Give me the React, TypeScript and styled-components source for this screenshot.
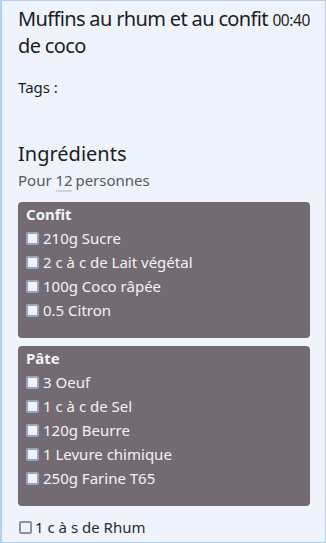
import styled, { createGlobalStyle } from "styled-components";

const GlobalStyle = createGlobalStyle`
  html, body {
    margin: 0;
    padding: 0;
  }
  body {
    font-family: "Noto Sans", "Open Sans", sans-serif;
    color: #1c1c1f;
  }
`;

const Page = styled.main`
  box-sizing: border-box;
  height: 543px;
  background: #eff4fc;
  border: 1px solid #b4cfec;
  border-left-width: 2px;
  padding: 4px 15px 0 16px;
  overflow: hidden;
`;

const TitleRow = styled.header`
  display: flex;
  justify-content: space-between;
  align-items: baseline;
`;

const Title = styled.h1`
  flex: 1;
  margin: 0;
  font-size: 20px;
  line-height: 27px;
  letter-spacing: -0.65px;
  font-weight: 400;
`;

const Time = styled.span`
  flex: none;
  font-size: 15.5px;
  letter-spacing: -0.4px;
  white-space: nowrap;
`;

const Tags = styled.p`
  margin: 18px 0 0;
  font-size: 15px;
  line-height: 20px;
`;

const Heading = styled.h2`
  margin: 44px 0 0;
  font-size: 20px;
  line-height: 26px;
  font-weight: 400;
`;

const Servings = styled.p`
  margin: 3px 0 0;
  font-size: 15px;
  line-height: 20px;
  color: #555a62;
`;

const ServingsInput = styled.span`
  display: inline-block;
  width: 16px;
  line-height: 20px;
  border-bottom: 2px solid #cfd3dc;
  margin-bottom: -2px;
  text-align: center;
`;

const List = styled.div`
  margin-top: 12px;
  display: flex;
  flex-direction: column;
  gap: 8px;
`;

const Group = styled.section`
  background: #736b71;
  border-radius: 4px;
  padding: 0 8px 16px;
  color: #f3f3f5;
`;

const GroupTitle = styled.div`
  font-size: 15px;
  line-height: 24px;
  font-weight: 700;
`;

const Item = styled.label<{ $light?: boolean }>`
  display: flex;
  align-items: center;
  gap: ${({ $light }) => ($light ? "3px" : "4px")};
  margin-top: ${({ $light }) => ($light ? "1px" : "0")};
  font-size: 15px;
  line-height: 24px;
  color: ${({ $light }) => ($light ? "#2b2b30" : "inherit")};
`;

const Box = styled.span<{ $light?: boolean }>`
  box-sizing: border-box;
  width: 13px;
  height: 13px;
  flex: none;
  border-radius: 2px;
  background: ${({ $light }) => ($light ? "transparent" : "#eef2fb")};
  border: 2px solid ${({ $light }) => ($light ? "#8c8f9c" : "#9ea2bc")};
  margin-left: ${({ $light }) => ($light ? "1px" : "0")};
`;

const groups = [
  {
    name: "Confit",
    items: ["210g Sucre", "2 c à c de Lait végétal", "100g Coco râpée", "0.5 Citron"],
  },
  {
    name: "Pâte",
    items: ["3 Oeuf", "1 c à c de Sel", "120g Beurre", "1 Levure chimique", "250g Farine T65"],
  },
];

export default function App() {
  return (
    <>
      <GlobalStyle />
      <Page>
        <TitleRow>
          <Title>Muffins au rhum et au confit de coco</Title>
          <Time>00:40</Time>
        </TitleRow>
        <Tags>Tags :</Tags>
        <Heading>Ingrédients</Heading>
        <Servings>
          Pour <ServingsInput>12</ServingsInput> personnes
        </Servings>
        <List>
          {groups.map((g) => (
            <Group key={g.name}>
              <GroupTitle>{g.name}</GroupTitle>
              {g.items.map((it) => (
                <Item key={it}>
                  <Box />
                  {it}
                </Item>
              ))}
            </Group>
          ))}
          <Item $light>
            <Box $light />1 c à s de Rhum
          </Item>
        </List>
      </Page>
    </>
  );
}
